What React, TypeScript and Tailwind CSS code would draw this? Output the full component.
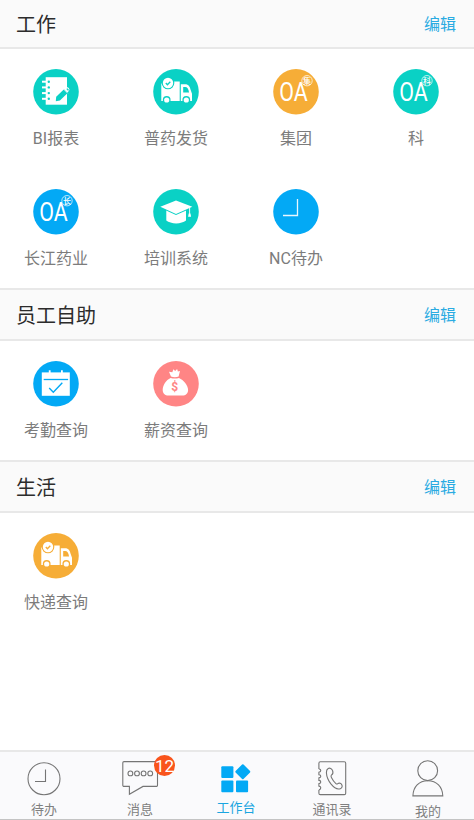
import React from 'react';

const TEAL = '#0ad1c5';
const ORANGE = '#f6ad37';
const BLUE = '#03a9f5';
const PINK = '#ff8585';

interface AppItem {
    label: string;
    icon: React.ReactNode;
}

interface SectionProps {
    title: string;
    items: AppItem[];
    first?: boolean;
}

const Disc: React.FC<{ color: string; children: React.ReactNode }> = ({ color, children }) => (
    <svg viewBox="0 0 46 46" className="w-[46px] h-[46px]" fill="none">
        <circle cx="23" cy="22.8" r="22.8" fill={color} />
        {children}
    </svg>
);

const ReportIcon = () => (
    <Disc color={TEAL}>
        <rect x="12.7" y="8.2" width="21.3" height="27.5" fill="#fff" />
        {[12.7, 18.4, 24.1, 29.8].map(y => (
            <g key={y}>
                <path d={`M9 ${y}h5`} stroke="#fff" strokeWidth="2" />
                <circle cx="15.8" cy={y} r="1.2" fill={TEAL} />
            </g>
        ))}
        <path d="M32 22.6L34.2 20.7" stroke="#fff" strokeWidth="4.4" strokeLinecap="round" />
        <path d="M22.8 32.2l.4-4.4 7.8-7.6 3.7 3.8-7.8 7.6z" fill={TEAL} />
        <path d="M33.4 20l1-.8 1.5 1.6-.8 1.1z" fill={TEAL} />
        <path d="M30.7 20.2l4 4.1" stroke="#fff" strokeWidth=".7" />
    </Disc>
);

const TruckIcon: React.FC<{ color: string }> = ({ color }) => (
    <Disc color={color}>
        <path d="M8.3 14.5h4v-2h14.4V32H8.3z" fill="#fff" />
        <path d="M27.8 32V15.3h4.4c3.2 0 4.5 2.2 5.3 5.2l1.5 4.2V32z" fill="#fff" />
        <path d="M30.2 17.9h2c2 0 3.2 1.6 3.9 5.6h-5.9z" fill={color} />
        <circle cx="15" cy="14" r="6.3" fill={color} />
        <circle cx="15" cy="14" r="5.2" fill="#fff" />
        <path d="M12.8 14l1.6 1.7 2.9-3" stroke={color} strokeWidth="1.3" />
        <circle cx="13.7" cy="31" r="3.9" fill={color} />
        <circle cx="33.3" cy="31" r="3.9" fill={color} />
        <circle cx="13.7" cy="31" r="2.6" fill="#fff" />
        <circle cx="33.3" cy="31" r="2.6" fill="#fff" />
    </Disc>
);

const OAIcon: React.FC<{ color: string; mark: string }> = ({ color, mark }) => (
    <Disc color={color}>
        <text x="6.2" y="32" textLength="28.5" lengthAdjust="spacingAndGlyphs" fill="#fff" className="font-['Roboto',sans-serif] text-[25px]">OA</text>
        <circle cx="34" cy="11.7" r="5.2" fill={color} stroke="#fff" strokeWidth=".7" />
        <text x="34" y="14.6" textAnchor="middle" fill="#fff" className="text-[8px] font-medium">{mark}</text>
    </Disc>
);

const CapIcon = () => (
    <Disc color={TEAL}>
        <path d="M13.3 21h19.7v10.6c-2.4 1.9-5.8 2.8-9.8 2.8s-7.6-.9-9.9-2.8z" fill="#fff" />
        <path d="M7.3 17.7L23 11.4l16.3 6.3L23 25z" fill="#fff" stroke={TEAL} strokeWidth="2" paintOrder="stroke" />
        <path d="M36.6 18.5v6.5" stroke="#fff" strokeWidth=".9" />
        <path d="M35.7 24.5h1.8l.6 3.2h-3z" fill="#fff" />
    </Disc>
);

const PendingIcon = () => (
    <Disc color={BLUE}>
        <path d="M24.5 10v16.5H10" stroke="#e8f7ff" strokeWidth="1.3" />
    </Disc>
);

const CalendarIcon = () => (
    <Disc color={BLUE}>
        <rect x="8.8" y="11.4" width="28" height="23.4" fill="#fff" />
        <path d="M16.7 9.3v4M28.9 9.3v4" stroke="#fff" strokeWidth="1.8" />
        <path d="M10.7 18.5h24.4" stroke={BLUE} strokeWidth="1.3" />
        <path d="M16.2 27l4.1 4.2 9-9.4" stroke={BLUE} strokeWidth="1.4" />
    </Disc>
);

const MoneyBagIcon = () => (
    <Disc color={PINK}>
        <path d="M18 15.6l-2-4.9 3.3.6 1.1-3 1.8 1.6 1.9-2 .8 2.7 2.1-.5-1.4 5.5c-2.2.8-5.3.8-7.6 0z" fill="#fff" />
        <path d="M17.6 16.9c2.6.9 5.8.9 8.4 0 4.6 2 9.1 7.3 9.1 12 0 3.5-2.3 5.6-5.8 5.6H15.5c-3.5 0-5.8-2.1-5.8-5.6 0-4.7 3.3-10 7.9-12z" fill="#fff" />
        <text x="21.8" y="29.7" textAnchor="middle" fill={PINK} className="font-['Roboto',sans-serif] text-[12px] font-bold">$</text>
    </Disc>
);

const Section: React.FC<SectionProps> = ({ title, items, first }) => (
    <section>
        <header
            className={
                first
                    ? 'h-[49px] flex items-center justify-between pl-4 pr-[18px] bg-[#fafafa] border-b-2 border-[#e8e8e8]'
                    : 'h-[53px] -mt-px flex items-center justify-between pl-4 pr-[18px] bg-[#fafafa] border-y-2 border-[#e8e8e8]'
            }
        >
            <h2 className="pt-[3px] text-[20px] leading-7 text-[#2c2c2c]">{title}</h2>
            <button className="pt-0.5 text-base leading-6 text-[#2aabe2]">编辑</button>
        </header>
        <div className="-ml-1 w-[480px] grid grid-cols-4">
            {items.map(item => (
                <div key={item.label} className="h-[120px] pt-5 flex flex-col items-center">
                    {item.icon}
                    <span className="mt-3 text-base leading-6 text-[#7c7c7c]">{item.label}</span>
                </div>
            ))}
        </div>
    </section>
);

const workItems: AppItem[] = [
    { label: 'BI报表', icon: <ReportIcon /> },
    { label: '普药发货', icon: <TruckIcon color={TEAL} /> },
    { label: '集团', icon: <OAIcon color={ORANGE} mark="集" /> },
    { label: '科', icon: <OAIcon color={TEAL} mark="科" /> },
    { label: '长江药业', icon: <OAIcon color={BLUE} mark="长" /> },
    { label: '培训系统', icon: <CapIcon /> },
    { label: 'NC待办', icon: <PendingIcon /> },
];

const selfServiceItems: AppItem[] = [
    { label: '考勤查询', icon: <CalendarIcon /> },
    { label: '薪资查询', icon: <MoneyBagIcon /> },
];

const lifeItems: AppItem[] = [{ label: '快递查询', icon: <TruckIcon color={ORANGE} /> }];

interface TabProps {
    label: string;
    labelClass?: string;
    badge?: number;
    children: React.ReactNode;
}

const Tab: React.FC<TabProps> = ({ label, labelClass = 'mt-[2px] text-[#808080]', badge, children }) => (
    <button className="relative w-24 pt-1.5 flex flex-col items-center">
        <svg viewBox="0 0 48 40" className="w-12 h-10" fill="none" stroke="#757575" strokeWidth="1.1">
            {children}
        </svg>
        {badge && (
            <span className="absolute left-[62px] top-[3px] w-[21px] h-[21px] rounded-full bg-[#f9541c] text-white text-[17px] leading-[23px] text-center">
                {badge}
            </span>
        )}
        <span className={`text-[13px] leading-5 ${labelClass}`}>{label}</span>
    </button>
);

const TabBar = () => (
    <nav className="h-[70px] bg-[#fafafc] border-t-2 border-t-[#e8e8e8] border-b border-b-[#c4c4c4]">
        <div className="-ml-1 w-[480px] flex">
            <Tab label="待办">
                <circle cx="24" cy="20.7" r="16" />
                <path d="M25.5 11.5v12H15" />
            </Tab>
            <Tab label="消息" badge={12}>
                <path d="M8 3.6h32.3a1.2 1.2 0 011.2 1.2v22.4a1.2 1.2 0 01-1.2 1.2H27L13.4 36.2v-7.8H8a1.2 1.2 0 01-1.2-1.2V4.8A1.2 1.2 0 018 3.6z" />
                {[14.4, 21, 27.6, 34.2].map(x => (
                    <circle key={x} cx={x} cy="15.4" r="2.4" />
                ))}
            </Tab>
            <Tab label="工作台" labelClass="text-[#1aa5e0]">
                <g fill={BLUE} stroke="none">
                    <rect x="9.3" y="8.2" width="12.1" height="11.8" rx="1" />
                    <rect x="9.3" y="22.4" width="12.1" height="11.8" rx="1" />
                    <rect x="24" y="22.4" width="12.1" height="11.8" rx="1" />
                    <rect x="25.2" y="8.2" width="11.2" height="11.2" rx="1" transform="rotate(45 30.8 13.8)" />
                </g>
            </Tab>
            <Tab label="通讯录">
                <path d="M10.9 11V5.2a1.4 1.4 0 011.400-1.400h24a1.400 1.400 0 011.400 1.400v30a1.400 1.400 0 01-1.400 1.400h-24a1.400 1.400 0 01-1.400-1.400V32" />
                <path d="M10.900 11c2.500.2 2.500 2.700 0 3.200v2.500c2.500.2 2.500 2.700 0 3.200v2.500c2.500.2 2.500 2.700 0 3.200v2.500c2.500.2 2.500 3 0 3.900" />
                <path d="M20.200 10.400c1.600-.9 3.600.3 4.400 2.200.7 1.900.4 3.500-1.200 4.500-.6.500-.5 1.300 0 2.300 1.300 2.500 2.700 4.600 4.500 6.200.7.600 1.300.6 1.900.1 1.500-1.200 3.400-.3 4.200 1.600.5 1.400-.2 2.900-1.700 3.400-3.200 1.100-6.600-1.300-9.200-4.500-2.700-3.500-4.500-7.500-4.700-11.500-.1-1.900.4-3.500 1.800-4.300z" />
            </Tab>
            <Tab label="我的" labelClass="mt-1 text-[#808080]">
                <circle cx="23.7" cy="12.7" r="9.9" />
                <path d="M8.9 37.9c.3-9 6-15.1 14.9-15.1s14.7 6.1 15 15.1z" />
            </Tab>
        </div>
    </nav>
);

const App: React.FC = () => (
    <div className="w-[474px] h-[820px] overflow-hidden flex flex-col bg-white font-['Roboto','Noto_Sans_CJK_SC',sans-serif]">
        <main className="flex-1">
            <Section title="工作" items={workItems} first />
            <Section title="员工自助" items={selfServiceItems} />
            <Section title="生活" items={lifeItems} />
        </main>
        <TabBar />
    </div>
);

export default App;
